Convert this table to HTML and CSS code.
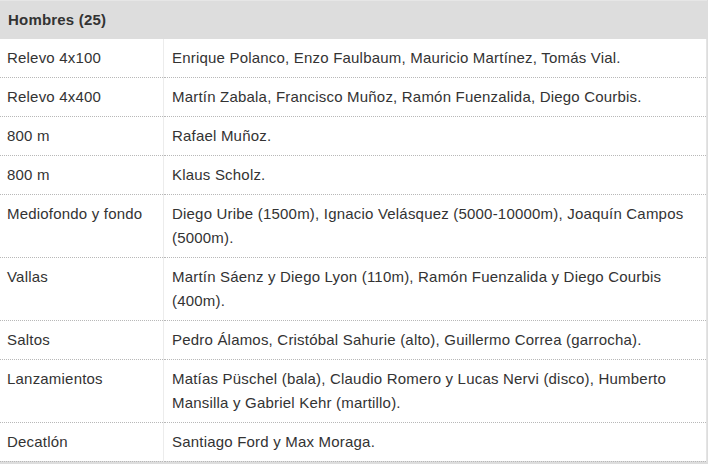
FILE: index.html
```html
<!DOCTYPE html>
<html lang="es">
<head>
<meta charset="utf-8">
<title>Hombres</title>
<link rel="stylesheet" href="styles.css">
</head>
<body>
<div class="wrap">
  <table class="team">
    <thead>
      <tr><th colspan="2">Hombres (25)</th></tr>
    </thead>
    <tbody>
      <tr><td class="ev">Relevo 4x100</td><td>Enrique Polanco, Enzo Faulbaum, Mauricio Martínez, Tomás Vial.</td></tr>
      <tr><td class="ev">Relevo 4x400</td><td>Martín Zabala, Francisco Muñoz, Ramón Fuenzalida, Diego Courbis.</td></tr>
      <tr><td class="ev">800 m</td><td>Rafael Muñoz.</td></tr>
      <tr><td class="ev">800 m</td><td>Klaus Scholz.</td></tr>
      <tr><td class="ev">Mediofondo y fondo</td><td>Diego Uribe (1500m), Ignacio Velásquez (5000-10000m), Joaquín Campos (5000m).</td></tr>
      <tr><td class="ev">Vallas</td><td>Martín Sáenz y Diego Lyon (110m), Ramón Fuenzalida y Diego Courbis (400m).</td></tr>
      <tr><td class="ev">Saltos</td><td>Pedro Álamos, Cristóbal Sahurie (alto), Guillermo Correa (garrocha).</td></tr>
      <tr><td class="ev">Lanzamientos</td><td>Matías Püschel (bala), Claudio Romero y Lucas Nervi (disco), Humberto Mansilla y Gabriel Kehr (martillo).</td></tr>
      <tr><td class="ev">Decatlón</td><td>Santiago Ford y Max Moraga.</td></tr>
    </tbody>
    <tfoot>
      <tr><td colspan="2" class="next"></td></tr>
    </tfoot>
  </table>
</div>
</body>
</html>
```
FILE: styles.css
```css
html, body {
  margin: 0;
  padding: 0;
  background: #dddddd;
}
.wrap {
  width: 708px;
  height: 464px;
  overflow: hidden;
  background: #dddddd;
}
.team {
  width: 707px;
  border-collapse: collapse;
  font-family: "Liberation Sans", Arial, sans-serif;
  font-size: 15px;
  letter-spacing: 0.2px;
  color: #333333;
}
.team th {
  background: #dddddd;
  text-align: left;
  font-weight: bold;
  height: 38px;
  padding: 0 8px;
  box-sizing: border-box;
  border-top: 1px solid #e6e6e6;
}
.team td {
  background: #ffffff;
  padding: 7px 8px 7px 8px;
  line-height: 24px;
  vertical-align: top;
  border-bottom: 1px dotted #b8b8b8;
  border-right: 1px solid #e4e4e4;
}
.team td.ev {
  width: 148px;
  padding-left: 7px;
  border-right: 1px solid #ececec;
}
.team td.next {
  background: #dddddd;
  height: 10px;
  padding: 0;
  border: none;
}
```
